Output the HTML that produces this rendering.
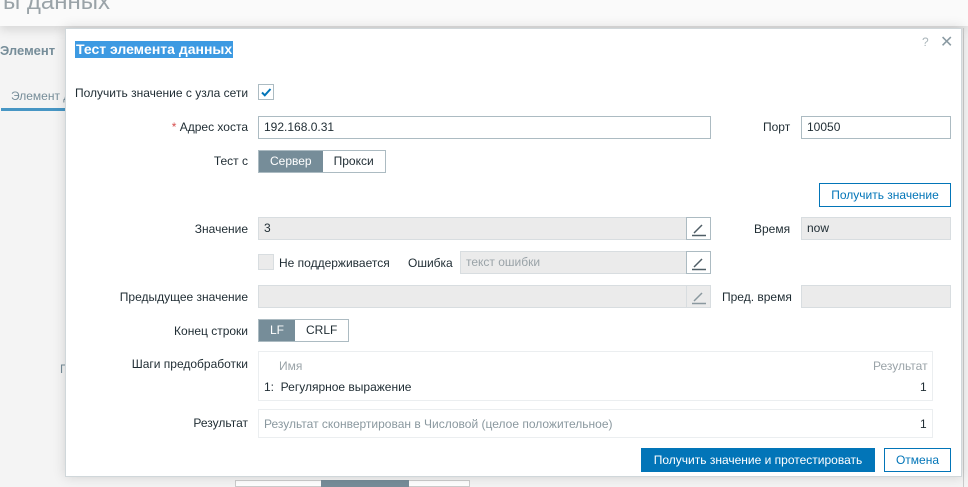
<!DOCTYPE html>
<html><head><meta charset="utf-8"><style>
*{box-sizing:border-box;margin:0;padding:0}
body{width:968px;height:487px;overflow:hidden;background:#f4f4f4;font-family:"Liberation Sans",sans-serif;font-size:12px;color:#1f2c33;position:relative}
.a{position:absolute}
.lbl{position:absolute;text-align:right;width:200px;left:48px}
.inp{position:absolute;height:23px;border:1px solid #acbbc2;background:#fff;padding:3px 5px;font-size:12px;line-height:15px}
.dis{background:#ebebeb;border-color:#d8dde0}
.pen{position:absolute;right:-1px;top:-1px;width:25px;height:23px;border:1px solid #acbbc2;background:#fff}
.seg{position:absolute;height:23px;border:1px solid #acbbc2;display:flex}
.seg div{padding:0 11px;line-height:21px}
.seg .on{background:#768d99;color:#fff}
</style></head><body>
<div class="a" style="left:0;top:0;width:968px;height:26px;background:#fafafa;box-shadow:0 4px 10px rgba(0,0,0,.12)"></div>
<div class="a" style="left:3px;top:-12px;font-size:24px;color:#9aa3a8">ы данных</div>
<div class="a" style="left:0;top:43px;font-weight:bold;font-size:13px;color:#768d99">Элемент</div>
<div class="a" style="left:11px;top:89px;color:#768d99">Элемент д</div>
<div class="a" style="left:1px;top:108px;width:64px;height:3px;background:#4796c4"></div>
<div class="a" style="left:60px;top:362px;color:#768d99">П</div>
<div class="a" style="left:963px;top:28px;width:1px;height:459px;background:#ccc"></div>
<div class="a" style="left:235px;top:480px;width:235px;height:7px;border:1px solid #ccc;background:#fff"></div>
<div class="a" style="left:321px;top:480px;width:88px;height:7px;background:#768d99"></div>
<div class="a" style="left:65px;top:28px;width:897px;height:449px;background:#fff;border:1px solid #d0d7da;box-shadow:0 0 12px rgba(0,0,0,.15)">
</div>
<div class="a" style="left:75px;top:41px;background:#3d9ae2;color:#fff;font-weight:bold;font-size:14px;line-height:17px;padding:0 1px">Тест элемента данных</div>
<div class="a" style="left:922px;top:35px;color:#aab5ba;font-size:12px">?</div>
<div class="a" style="left:940px;top:32px;color:#8a9aa2;font-size:16px">✕</div>

<div class="a" style="left:75px;top:86px">Получить значение с узла сети</div>
<div class="a" style="left:258px;top:84px;width:16px;height:16px;border:1px solid #acbbc2"><svg width="14" height="14" viewBox="0 0 14 14"><path d="M3 7.5l2.8 2.8L11.5 4" stroke="#0275b8" stroke-width="2" fill="none"/></svg></div>

<div class="lbl" style="top:120px"><span style="color:#d64e4e">*</span> Адрес хоста</div>
<div class="inp" style="left:258px;top:116px;width:453px">192.168.0.31</div>
<div class="a" style="left:763px;top:120px">Порт</div>
<div class="inp" style="left:801px;top:116px;width:150px">10050</div>

<div class="lbl" style="top:154px">Тест с</div>
<div class="seg" style="left:258px;top:150px"><div class="on">Сервер</div><div>Прокси</div></div>

<div class="a" style="left:819px;top:183px;width:132px;height:24px;border:1px solid #0275b8;color:#0275b8;text-align:center;line-height:22px">Получить значение</div>

<div class="lbl" style="top:222px">Значение</div>
<div class="inp dis" style="left:258px;top:217px;width:453px">3<div class="pen"><svg width="23" height="21"><path d="M7 15L15 7" stroke="#4f5e66" stroke-width="1.5"/><path d="M5 17.5h14" stroke="#4f5e66" stroke-width="1.5"/></svg></div></div>
<div class="a" style="left:754px;top:222px">Время</div>
<div class="inp dis" style="left:801px;top:217px;width:150px">now</div>

<div class="a" style="left:258px;top:254px;width:16px;height:16px;border:1px solid #d8dde0;background:#ebebeb"></div>
<div class="a" style="left:279px;top:256px">Не поддерживается</div>
<div class="a" style="left:408px;top:256px">Ошибка</div>
<div class="inp dis" style="left:460px;top:251px;width:251px;color:#9aa3a8">текст ошибки<div class="pen"><svg width="23" height="21"><path d="M7 15L15 7" stroke="#4f5e66" stroke-width="1.5"/><path d="M5 17.5h14" stroke="#4f5e66" stroke-width="1.5"/></svg></div></div>

<div class="lbl" style="top:290px">Предыдущее значение</div>
<div class="inp dis" style="left:258px;top:285px;width:453px"><div class="pen" style="background:#ebebeb;border-color:#d8dde0"><svg width="23" height="21"><path d="M7 15L15 7" stroke="#8a989f" stroke-width="1.5"/><path d="M5 17.5h14" stroke="#8a989f" stroke-width="1.5"/></svg></div></div>
<div class="a" style="left:722px;top:290px">Пред. время</div>
<div class="inp dis" style="left:801px;top:285px;width:150px"></div>

<div class="lbl" style="top:324px">Конец строки</div>
<div class="seg" style="left:258px;top:319px"><div class="on">LF</div><div>CRLF</div></div>

<div class="lbl" style="top:357px">Шаги предобработки</div>
<div class="a" style="left:258px;top:351px;width:675px;height:50px;border:1px solid #ebeef0"></div>
<div class="a" style="left:279px;top:359px;color:#9aa3a8">Имя</div>
<div class="a" style="left:873px;top:359px;color:#9aa3a8">Результат</div>
<div class="a" style="left:264px;top:380px">1:&nbsp; Регулярное выражение</div>
<div class="a" style="left:920px;top:380px">1</div>

<div class="lbl" style="top:416px">Результат</div>
<div class="a" style="left:258px;top:409px;width:675px;height:29px;border:1px solid #ebeef0"></div>
<div class="a" style="left:264px;top:417px;color:#8a989f">Результат сконвертирован в Числовой (целое положительное)</div>
<div class="a" style="left:920px;top:417px">1</div>

<div class="a" style="left:641px;top:448px;width:234px;height:24px;background:#0275b8;color:#fff;text-align:center;line-height:24px">Получить значение и протестировать</div>
<div class="a" style="left:884px;top:448px;width:67px;height:24px;border:1px solid #0275b8;color:#0275b8;text-align:center;line-height:22px">Отмена</div>
</body></html>
